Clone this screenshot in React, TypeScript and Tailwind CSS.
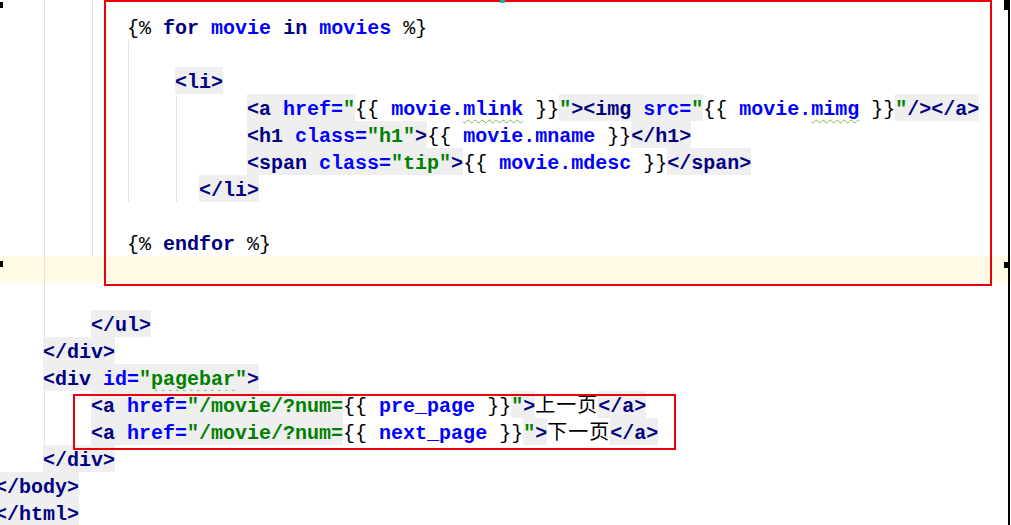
import React from 'react';

type Kind = 'tag' | 'attr' | 'val' | 'kw' | 'var' | 'jt' | 'cjk' | 'sp';
type Tok = { t: string; k: Kind; g?: boolean; w?: boolean };

const kindClass: Record<Kind, string> = {
    tag: 'text-[#000080] font-bold',
    attr: 'text-[#0000ff] font-bold',
    val: 'text-[#008000] font-bold',
    kw: 'text-[#000080] font-bold',
    var: 'text-[#0000ff] font-bold',
    jt: 'text-black',
    cjk: 'text-black font-normal tracking-[1px]',
    sp: '',
};

const ind = (n: number): Tok => ({ t: ' '.repeat(n), k: 'sp' });

// g = gray html background, w = wavy typo underline
const lines: Tok[][] = [
    [ind(11), { t: '{%', k: 'jt' }, { t: ' ', k: 'sp' }, { t: 'for', k: 'kw' }, { t: ' ', k: 'sp' }, { t: 'movie', k: 'var' }, { t: ' ', k: 'sp' }, { t: 'in', k: 'kw' }, { t: ' ', k: 'sp' }, { t: 'movies', k: 'var' }, { t: ' ', k: 'sp' }, { t: '%}', k: 'jt' }],
    [],
    [ind(15), { t: '<li>', k: 'tag', g: true }],
    [
        ind(21),
        { t: '<a', k: 'tag', g: true }, { t: ' ', k: 'sp', g: true }, { t: 'href=', k: 'attr', g: true }, { t: '"', k: 'val', g: true },
        { t: '{{ ', k: 'jt' }, { t: 'movie.', k: 'var' }, { t: 'mlink', k: 'var', w: true }, { t: ' }}', k: 'jt' },
        { t: '"', k: 'val', g: true }, { t: '><img', k: 'tag', g: true }, { t: ' ', k: 'sp', g: true }, { t: 'src=', k: 'attr', g: true }, { t: '"', k: 'val', g: true },
        { t: '{{ ', k: 'jt' }, { t: 'movie.', k: 'var' }, { t: 'mimg', k: 'var', w: true }, { t: ' }}', k: 'jt' },
        { t: '"', k: 'val', g: true }, { t: '/></a>', k: 'tag', g: true },
    ],
    [
        ind(21),
        { t: '<h1', k: 'tag', g: true }, { t: ' ', k: 'sp', g: true }, { t: 'class=', k: 'attr', g: true }, { t: '"h1"', k: 'val', g: true }, { t: '>', k: 'tag', g: true },
        { t: '{{ ', k: 'jt' }, { t: 'movie.mname', k: 'var' }, { t: ' }}', k: 'jt' },
        { t: '</h1>', k: 'tag', g: true },
    ],
    [
        ind(21),
        { t: '<span', k: 'tag', g: true }, { t: ' ', k: 'sp', g: true }, { t: 'class=', k: 'attr', g: true }, { t: '"tip"', k: 'val', g: true }, { t: '>', k: 'tag', g: true },
        { t: '{{ ', k: 'jt' }, { t: 'movie.mdesc', k: 'var' }, { t: ' }}', k: 'jt' },
        { t: '</span>', k: 'tag', g: true },
    ],
    [ind(17), { t: '</li>', k: 'tag', g: true }],
    [],
    [ind(11), { t: '{%', k: 'jt' }, { t: ' ', k: 'sp' }, { t: 'endfor', k: 'kw' }, { t: ' ', k: 'sp' }, { t: '%}', k: 'jt' }],
    [],
    [],
    [ind(8), { t: '</ul>', k: 'tag', g: true }],
    [ind(4), { t: '</div>', k: 'tag', g: true }],
    [
        ind(4),
        { t: '<div', k: 'tag', g: true }, { t: ' ', k: 'sp', g: true }, { t: 'id=', k: 'attr', g: true }, { t: '"', k: 'val', g: true },
        { t: 'pagebar', k: 'val', g: true, w: true }, { t: '"', k: 'val', g: true }, { t: '>', k: 'tag', g: true },
    ],
    [
        ind(8),
        { t: '<a', k: 'tag', g: true }, { t: ' ', k: 'sp', g: true }, { t: 'href=', k: 'attr', g: true }, { t: '"/movie/?num=', k: 'val', g: true },
        { t: '{{ ', k: 'jt' }, { t: 'pre_page', k: 'var' }, { t: ' }}', k: 'jt' },
        { t: '"', k: 'val', g: true }, { t: '>', k: 'tag', g: true },
        { t: '上一页', k: 'cjk' },
        { t: '</a>', k: 'tag', g: true },
    ],
    [
        ind(8),
        { t: '<a', k: 'tag', g: true }, { t: ' ', k: 'sp', g: true }, { t: 'href=', k: 'attr', g: true }, { t: '"/movie/?num=', k: 'val', g: true },
        { t: '{{ ', k: 'jt' }, { t: 'next_page', k: 'var' }, { t: ' }}', k: 'jt' },
        { t: '"', k: 'val', g: true }, { t: '>', k: 'tag', g: true },
        { t: '下一页', k: 'cjk' },
        { t: '</a>', k: 'tag', g: true },
    ],
    [ind(4), { t: '</div>', k: 'tag', g: true }],
    [{ t: '</body>', k: 'tag', g: true }],
    [{ t: '</html>', k: 'tag', g: true }],
];

const CARET_LINE = 9;

// indent guides: [x, top, bottom]
const guides: [number, number, number][] = [
    [44, 0, 337],
    [44, 391, 445],
    [92, 0, 256],
    [128, 41, 202],
    [176, 95, 202],
];

export default function App() {
    return (
        <div className="relative w-[1011px] h-[525px] overflow-hidden bg-white">
            <div className="flex flex-col pt-[13px] ml-[-5px] font-['Liberation_Mono','Noto_Sans_CJK_SC',monospace] text-[20px] whitespace-pre">
                {lines.map((line, i) => (
                    <div
                        key={i}
                        className={`h-[27px] flex items-start ${i === CARET_LINE ? 'bg-[#fffae3] mr-[-3px]' : ''}`}
                    >
                        {line.map((tok, j) => (
                            <span
                                key={j}
                                className={`h-[27px] leading-[31px] ${kindClass[tok.k]} ${tok.g ? 'bg-[#efefef]' : ''} ${tok.w ? 'underline decoration-wavy decoration-[#7fb55a] decoration-1 underline-offset-[4px]' : ''}`}
                            >
                                {tok.t}
                            </span>
                        ))}
                    </div>
                ))}
            </div>

            {/* indent guides */}
            {guides.map(([x, top, bottom], i) => (
                <div
                    key={i}
                    className="absolute w-px bg-[#e2e2e2]"
                    style={{ left: x, top, height: bottom - top }}
                />
            ))}

            {/* red annotation boxes */}
            <div className="absolute left-[104px] top-0 w-[888px] h-[286px] border-2 border-[#e8000b]" />
            <div className="absolute left-[73px] top-[394px] w-[603px] h-[56px] border-2 border-[#e8000b]" />

            {/* screenshot selection handles */}
            <div className="absolute left-0 top-[2px] w-[3px] h-[6px] bg-black" />
            <div className="absolute left-0 top-[261px] w-[3px] h-[6px] bg-black" />
            <div className="absolute left-[500px] top-0 w-[5px] h-[3px] bg-[#17b3a3]" />
            <div className="absolute left-[1008px] top-0 w-[2px] h-[525px] bg-black" />
            <div className="absolute left-[1004px] top-0 w-[6px] h-[10px] bg-black" />
            <div className="absolute left-[1004px] top-[262px] w-[6px] h-[6px] bg-black" />
        </div>
    );
}
